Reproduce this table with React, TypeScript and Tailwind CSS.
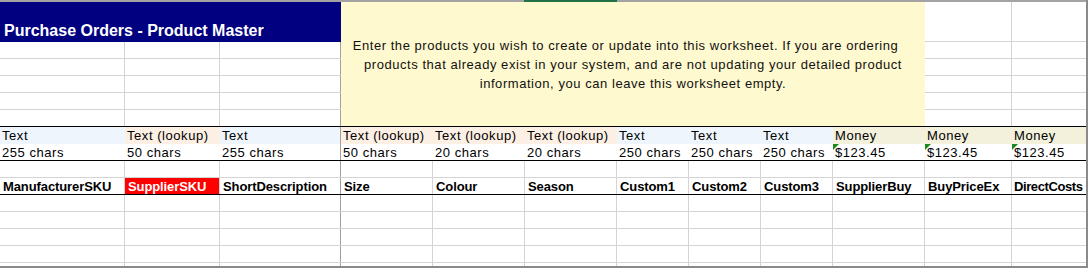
import React from "react";

type Kind = "text" | "lookup" | "money";

interface Field {
  w: string;
  kind: Kind;
  size: string;
  name: string;
}

// Column widths include the 1px right gridline of each cell.
const fields: Field[] = [
  { w: "w-[125px]", kind: "text", size: "255 chars", name: "ManufacturerSKU" },
  { w: "w-[95px]", kind: "lookup", size: "50 chars", name: "SupplierSKU" },
  { w: "w-[121px]", kind: "text", size: "255 chars", name: "ShortDescription" },
  { w: "w-[92px]", kind: "lookup", size: "50 chars", name: "Size" },
  { w: "w-[92px]", kind: "lookup", size: "20 chars", name: "Colour" },
  { w: "w-[92px]", kind: "lookup", size: "20 chars", name: "Season" },
  { w: "w-[72px]", kind: "text", size: "250 chars", name: "Custom1" },
  { w: "w-[72px]", kind: "text", size: "250 chars", name: "Custom2" },
  { w: "w-[72px]", kind: "text", size: "250 chars", name: "Custom3" },
  { w: "w-[92px]", kind: "money", size: "$123.45", name: "SupplierBuy" },
  { w: "w-[87px]", kind: "money", size: "$123.45", name: "BuyPriceEx" },
  { w: "w-[74px]", kind: "money", size: "$123.45", name: "DirectCosts" },
];

const kindLabel: Record<Kind, string> = {
  text: "Text",
  lookup: "Text (lookup)",
  money: "Money",
};

const kindBg: Record<Kind, string> = {
  text: "bg-[#eef5fd]",
  lookup: "bg-[#fcefe4]",
  money: "bg-[#f3f1dc]",
};

// Column C carries the darker frozen-pane divider.
const FROZEN = 2;
const LAST = fields.length - 1;

function rightLine(i: number) {
  if (i === FROZEN) return "border-r border-r-[#a0a0a0]";
  if (i === LAST) return "";
  return "border-r border-r-[#d4d4d4]";
}

function GridRow({ bottom }: { bottom: "gray" | "black" }) {
  return (
    <div
      className={`flex h-[17px] shrink-0 border-b ${
        bottom === "black" ? "border-b-black" : "border-b-[#d4d4d4]"
      }`}
    >
      {fields.map((f, i) => (
        <div key={i} className={`${f.w} shrink-0 h-full ${rightLine(i)}`} />
      ))}
    </div>
  );
}

function ErrorMark() {
  return (
    <span className="absolute left-0 top-0 w-0 h-0 border-t-[6px] border-t-[#1d8a1d] border-r-[6px] border-r-transparent" />
  );
}

export default function App() {
  return (
    <div
      className="w-[1088px] h-[268px] overflow-hidden bg-white text-black text-[13px] tracking-[0.55px] border-r-2 border-r-[#8a8a8a] border-b-2 border-b-[#8a8a8a] flex flex-col"
      style={{ fontFamily: '"Liberation Sans", Arial, sans-serif' }}
    >
      {/* window top edge with the active column marker */}
      <div className="flex h-[2px] shrink-0">
        <div className="w-[524px] bg-[#a3a3a3]" />
        <div className="w-[93px] bg-[#217346]" />
        <div className="flex-1 bg-[#a3a3a3]" />
      </div>

      {/* rows 1-6: title, note block and empty cells */}
      <div className="flex h-[125px] shrink-0">
        <div className="w-[341px] shrink-0 flex flex-col">
          <div className="h-[40px] bg-[#000080] flex items-end pl-[4px] pb-[2px]">
            <span className="text-white font-bold text-[16px] leading-[18px] tracking-normal whitespace-nowrap">
              Purchase Orders - Product Master
            </span>
          </div>
          {[0, 1, 2, 3, 4].map((r) => (
            <div
              key={r}
              className={`flex h-[17px] border-b ${
                r === 4 ? "border-b-black" : "border-b-[#d4d4d4]"
              }`}
            >
              <div className="w-[125px] border-r border-r-[#d4d4d4]" />
              <div className="w-[95px] border-r border-r-[#d4d4d4]" />
              <div className="w-[121px] border-r border-r-[#a0a0a0]" />
            </div>
          ))}
        </div>

        <div className="w-[584px] shrink-0 bg-[#fff9cf] border-b border-b-black flex flex-col justify-center pt-[1px] leading-[19px] text-[#111] whitespace-nowrap">
          <div className="text-center pr-[15px]">
            Enter the products you wish to create or update into this worksheet. If you are ordering
          </div>
          <div className="text-center">
            products that already exist in your system, and are not updating your detailed product
          </div>
          <div className="text-center">information, you can leave this worksheet empty.</div>
        </div>

        <div className="flex-1 flex flex-col">
          {[0, 1, 2, 3, 4, 5].map((r) => (
            <div
              key={r}
              className={`flex ${r === 0 ? "h-[40px]" : "h-[17px]"} border-b ${
                r === 5 ? "border-b-black" : "border-b-[#d4d4d4]"
              }`}
            >
              <div className="w-[87px] border-r border-r-[#d4d4d4]" />
              <div className="flex-1" />
            </div>
          ))}
        </div>
      </div>

      {/* row 7: data types */}
      <div className="flex h-[17px] shrink-0">
        {fields.map((f, i) => (
          <div
            key={i}
            className={`${f.w} shrink-0 ${kindBg[f.kind]} ${
              i === FROZEN ? "border-r border-r-[#a0a0a0]" : ""
            } px-[2px] leading-[17px] whitespace-nowrap overflow-hidden`}
          >
            {kindLabel[f.kind]}
          </div>
        ))}
      </div>

      {/* row 8: field sizes */}
      <div className="flex h-[17px] shrink-0 border-b border-b-black">
        {fields.map((f, i) => (
          <div
            key={i}
            className={`${f.w} shrink-0 relative ${
              i === FROZEN ? "border-r border-r-[#a0a0a0]" : ""
            } px-[2px] leading-[17px] whitespace-nowrap overflow-hidden`}
          >
            {f.kind === "money" ? <ErrorMark /> : null}
            {f.size}
          </div>
        ))}
      </div>

      {/* row 9: blank */}
      <GridRow bottom="gray" />

      {/* row 10: column headings */}
      <div className="flex h-[17px] shrink-0 border-b border-b-black">
        {fields.map((f, i) => (
          <div
            key={i}
            className={`${f.w} shrink-0 h-full ${rightLine(i)} ${
              f.name === "SupplierSKU" ? "bg-[#ff0000] text-white" : ""
            } ${
              i === LAST ? "pl-[2px] tracking-[-0.4px]" : "pl-[3px] tracking-[-0.1px]"
            } font-bold leading-[17px] whitespace-nowrap`}
          >
            {f.name}
          </div>
        ))}
      </div>

      {/* empty data rows */}
      <GridRow bottom="gray" />
      <GridRow bottom="gray" />
      <GridRow bottom="gray" />
      <GridRow bottom="gray" />
      <GridRow bottom="gray" />
    </div>
  );
}
